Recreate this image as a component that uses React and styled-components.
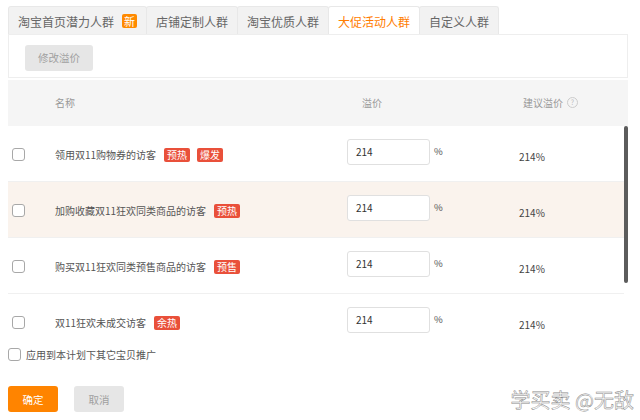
import React from 'react';
import styled, { createGlobalStyle } from 'styled-components';

const GlobalStyle = createGlobalStyle`
  body {
    margin: 0;
    background: #ffffff;
    font-family: "Noto Sans CJK SC", "Noto Sans", sans-serif;
  }
`;

const Page = styled.div`
  position: relative;
  width: 640px;
  height: 420px;
  padding: 6px 0 0 8px;
  box-sizing: border-box;
  overflow: hidden;
`;

const TabBar = styled.div`
  display: flex;
  height: 28px;
`;

const Tab = styled.div`
  display: flex;
  align-items: center;
  gap: 8px;
  height: 28px;
  box-sizing: border-box;
  padding: 1px 9px 0;
  margin-left: -1px;
  border: 1px solid #e8e8e8;
  border-bottom: none;
  border-radius: 3px 3px 0 0;
  background: ${p => (p.active ? '#ffffff' : '#f2f2f2')};
  color: ${p => (p.active ? '#ff7d00' : '#666666')};
  font-size: 12px;
  position: relative;
  z-index: ${p => (p.active ? 2 : 1)};
  &:first-child {
    margin-left: 0;
  }
`;

const NewBadge = styled.span`
  display: inline-flex;
  align-items: center;
  justify-content: center;
  width: 15px;
  height: 14px;
  border-radius: 2px;
  background: #ff8a00;
  color: #ffffff;
  font-size: 11px;
`;

const TabPanel = styled.div`
  width: 620px;
  height: 44px;
  box-sizing: border-box;
  border: 1px solid #eeeeee;
  padding: 8px 0 0 16px;
`;

const GrayButton = styled.button`
  height: 26px;
  padding: 0 ${p => (p.w ? 0 : 13)}px;
  width: ${p => p.w || 'auto'};
  border: none;
  border-radius: 3px;
  background: #e6e6e6;
  color: #a0a0a0;
  font-family: inherit;
  font-size: 10.5px;
  white-space: nowrap;
`;

const Table = styled.div`
  width: 620px;
  margin-top: 2px;
`;

const columns = '47px 292px 172px 1fr';

const HeadRow = styled.div`
  display: grid;
  grid-template-columns: ${columns};
  align-items: center;
  height: 46px;
  background: #f5f5f5;
  color: #999999;
  font-size: 10px;
`;

const HeadCell = styled.div`
  display: flex;
  align-items: center;
  gap: 4px;
  padding-left: ${p => p.pad || 0}px;
  padding-bottom: 1px;
`;

const HelpIcon = styled.span`
  display: inline-flex;
  align-items: center;
  justify-content: center;
  width: 9px;
  height: 9px;
  border: 1px solid #cccccc;
  border-radius: 50%;
  color: #bbbbbb;
  font-size: 7px;
  line-height: 1;
`;

const Body = styled.div`
  position: relative;
  height: 214px;
  overflow: hidden;
`;

const Row = styled.div`
  display: grid;
  grid-template-columns: ${columns};
  align-items: center;
  width: 616px;
  height: 56px;
  box-sizing: border-box;
  border-bottom: 1px solid #f0f0f0;
  background: ${p => (p.hover ? '#faf3ed' : '#ffffff')};
  color: #555555;
  font-size: 10px;
`;

const Box = styled.span`
  display: inline-block;
  width: 13px;
  height: 13px;
  border: 1px solid #a8a8a8;
  border-radius: 3px;
  background: #ffffff;
  box-sizing: border-box;
  flex-shrink: 0;
`;

const CheckCell = styled.div`
  padding-left: 4px;
  display: flex;
  align-items: center;
  padding-top: 2px;
`;

const NameCell = styled.div`
  display: flex;
  align-items: center;
  gap: 7px;
  padding-top: 2px;
`;

const Tag = styled.span`
  display: inline-flex;
  align-items: center;
  height: 14px;
  padding: 0 3px;
  border-radius: 2px;
  background: #e9503a;
  color: #ffffff;
  font-size: 10px;
  margin-left: ${p => (p.first ? 1 : 0)}px;
`;

const PriceCell = styled.div`
  display: flex;
  align-items: flex-start;
  gap: 4px;
  margin-top: -4px;
`;

const PriceInput = styled.div`
  width: 83px;
  height: 26px;
  box-sizing: border-box;
  border: 1px solid #e0e0e0;
  border-radius: 3px;
  background: #ffffff;
  padding-left: 8px;
  display: flex;
  align-items: center;
  color: #333333;
  font-size: 10px;
`;

const Percent = styled.span`
  font-size: 9.5px;
  color: #555555;
  padding-top: 5px;
`;

const SuggestCell = styled.div`
  font-size: 10px;
  color: #444444;
  padding-top: 6px;
`;

const ScrollThumb = styled.div`
  position: absolute;
  top: 0;
  right: 0;
  width: 4px;
  height: 157px;
  border-radius: 2px;
  background: #5c5c5c;
`;

const ApplyRow = styled.label`
  display: flex;
  align-items: center;
  gap: 5px;
  height: 14px;
  margin-top: 7px;
  color: #555555;
  font-size: 10px;
`;

const Actions = styled.div`
  display: flex;
  gap: 16px;
  margin-top: 25px;
`;

const PrimaryButton = styled.button`
  width: 50px;
  height: 26px;
  border: none;
  border-radius: 3px;
  background: #ff8400;
  color: #ffffff;
  font-family: inherit;
  font-size: 10.5px;
`;

const Watermark = styled.div`
  position: absolute;
  right: 6px;
  bottom: 6px;
  font-size: 20px;
  color: #fafafa;
  -webkit-text-stroke: 0.5px #8a8a8a;
`;

const tabs = [
  { label: '淘宝首页潜力人群', badge: true },
  { label: '店铺定制人群' },
  { label: '淘宝优质人群' },
  { label: '大促活动人群', active: true },
  { label: '自定义人群' },
];

const rows = [
  { name: '领用双11购物券的访客', tags: ['预热', '爆发'] },
  { name: '加购收藏双11狂欢同类商品的访客', tags: ['预热'], hover: true },
  { name: '购买双11狂欢同类预售商品的访客', tags: ['预售'] },
  { name: '双11狂欢未成交访客', tags: ['余热'] },
];

export default function App() {
  return (
    <Page>
      <GlobalStyle />
      <TabBar>
        {tabs.map(t => (
          <Tab key={t.label} active={t.active}>
            {t.label}
            {t.badge && <NewBadge>新</NewBadge>}
          </Tab>
        ))}
      </TabBar>
      <TabPanel>
        <GrayButton>修改溢价</GrayButton>
      </TabPanel>

      <Table>
        <HeadRow>
          <div />
          <HeadCell>名称</HeadCell>
          <HeadCell pad={15}>溢价</HeadCell>
          <HeadCell pad={4}>
            建议溢价 <HelpIcon>?</HelpIcon>
          </HeadCell>
        </HeadRow>
        <Body>
          {rows.map(r => (
            <Row key={r.name} hover={r.hover}>
              <CheckCell>
                <Box />
              </CheckCell>
              <NameCell>
                {r.name}
                {r.tags.map((t, i) => (
                  <Tag key={t} first={i === 0}>
                    {t}
                  </Tag>
                ))}
              </NameCell>
              <PriceCell>
                <PriceInput>214</PriceInput>
                <Percent>%</Percent>
              </PriceCell>
              <SuggestCell>214%</SuggestCell>
            </Row>
          ))}
          <ScrollThumb />
        </Body>
      </Table>

      <ApplyRow>
        <Box />
        应用到本计划下其它宝贝推广
      </ApplyRow>

      <Actions>
        <PrimaryButton>确定</PrimaryButton>
        <GrayButton w="50px">取消</GrayButton>
      </Actions>

      <Watermark>学买卖 @无敌</Watermark>
    </Page>
  );
}
